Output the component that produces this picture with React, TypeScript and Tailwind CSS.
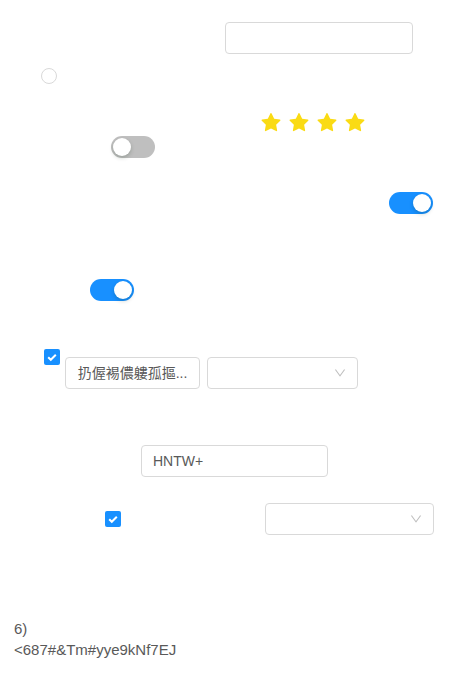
import React from "react";

const font = { fontFamily: '"Liberation Sans", Arial, "Noto Sans CJK TC", sans-serif' };

function Star() {
  return (
    <svg viewBox="64 64 896 896" className="w-5 h-5" fill="#fadb14">
      <path d="M908.1 353.1l-253.9-36.9L540.7 86.1c-3.1-6.3-8.2-11.4-14.5-14.5-15.8-7.8-35-1.3-42.9 14.5L369.8 316.2l-253.9 36.9c-7 1-13.4 4.3-18.3 9.3a32.05 32.05 0 00.6 45.3l183.7 179.1-43.4 252.9a31.950 31.950 0 0046.4 33.7L512 754l227.1 119.4c6.2 3.3 13.4 4.4 20.3 3.2 17.4-3 29.1-19.5 26.1-36.9l-43.4-252.9 183.7-179.1c5-4.9 8.3-11.3 9.3-18.3 2.7-17.5-9.5-33.7-27-36.300z" />
    </svg>
  );
}

function Toggle({ on }: { on: boolean }) {
  return (
    <div
      className={
        "w-[44px] h-[22px] rounded-full flex items-center px-[2px] " +
        (on ? "bg-[#1890ff] justify-end" : "bg-[#bfbfbf] justify-start")
      }
    >
      <div className="w-[18px] h-[18px] rounded-full bg-white shadow-[0_2px_4px_rgba(0,35,11,0.2)]" />
    </div>
  );
}

function Check() {
  return (
    <div className="w-4 h-4 rounded-[2px] bg-[#1890ff] flex items-center justify-center">
      <svg viewBox="0 0 16 16" className="w-4 h-4">
        <path d="M4.2 8.2l2.6 2.6 5-5" fill="none" stroke="white" strokeWidth="2" />
      </svg>
    </div>
  );
}

function Chevron() {
  return (
    <svg viewBox="64 64 896 896" className="w-3 h-3" fill="#bfbfbf">
      <path d="M884 256h-75c-5.1 0-9.9 2.5-12.9 6.6L512 654.2 227.9 262.6c-3-4.1-7.8-6.6-12.9-6.6h-75c-6.5 0-10.3 7.4-6.5 12.7l352.6 486.1c12.8 17.6 39 17.6 51.7 0l352.6-486.1c3.9-5.3.1-12.7-6.4-12.7z" />
    </svg>
  );
}

function Select({ w }: { w: string }) {
  return (
    <div className={"h-8 border border-[#d9d9d9] rounded bg-white flex items-center justify-end pr-[11px] " + w}>
      <Chevron />
    </div>
  );
}

export default function App() {
  return (
    <div className="w-[471px] h-[686px] bg-white text-[14px] text-[#595959] flex flex-col" style={font}>
      {/* text input */}
      <div className="pl-[225px] pt-[22px]">
        <div className="w-[188px] h-8 border border-[#d9d9d9] rounded" />
      </div>

      {/* radio */}
      <div className="pl-[41px] mt-[14px]">
        <div className="w-4 h-4 rounded-full border border-[#d9d9d9]" />
      </div>

      {/* rate */}
      <div className="pl-[261px] mt-[29px] flex gap-2">
        <Star />
        <Star />
        <Star />
        <Star />
      </div>

      <div className="pl-[111px] mt-[3px]">
        <Toggle on={false} />
      </div>

      <div className="pl-[389px] mt-[34px]">
        <Toggle on />
      </div>

      <div className="pl-[90px] mt-[65px]">
        <Toggle on />
      </div>

      {/* checkbox + button + select */}
      <div className="pl-[44px] mt-[48px] flex items-start">
        <Check />
        <div className="mt-2 ml-[5px] w-[135px] h-8 border border-[#d9d9d9] rounded flex items-center justify-center whitespace-nowrap">
          扔偓裼儂軁孤摳...
        </div>
        <div className="mt-2 ml-[7px]">
          <Select w="w-[151px]" />
        </div>
      </div>

      {/* input with value */}
      <div className="pl-[141px] mt-[56px]">
        <div className="w-[187px] h-8 border border-[#d9d9d9] rounded flex items-center px-[11px]">HNTW+</div>
      </div>

      <div className="pl-[105px] mt-[26px] flex items-center">
        <Check />
        <div className="ml-[144px]">
          <Select w="w-[169px]" />
        </div>
      </div>

      <div className="pl-[14px] mt-[83px] text-[15px] leading-[21px]">
        <div>6)</div>
        <div>&lt;687#&amp;Tm#yye9kNf7EJ</div>
      </div>
    </div>
  );
}
